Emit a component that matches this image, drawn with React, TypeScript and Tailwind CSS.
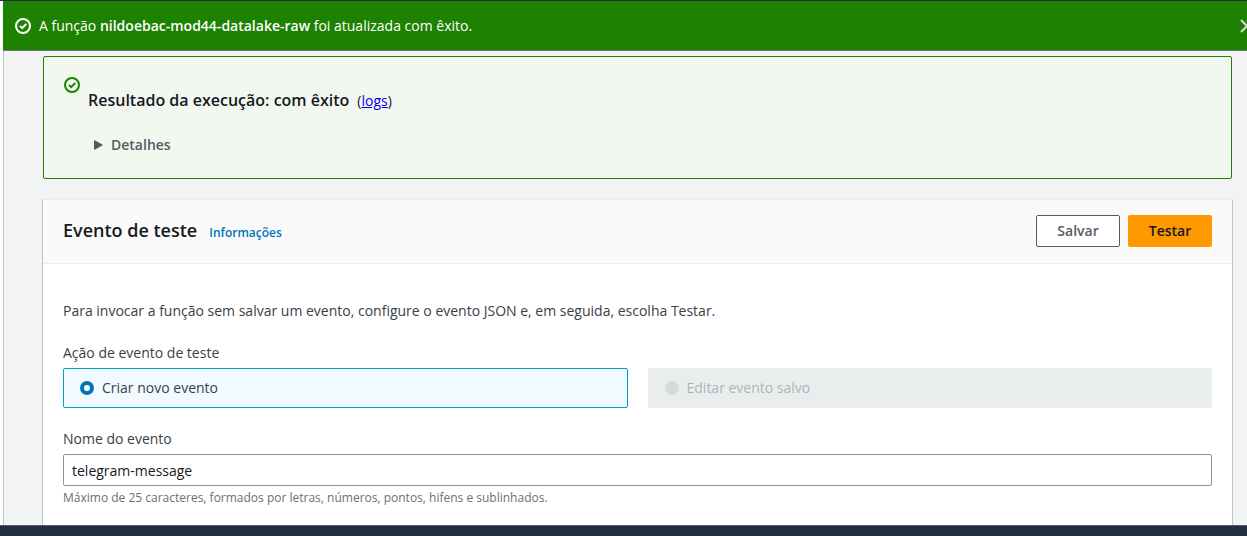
import { useState } from "react";

function SuccessIcon() {
  return (
    <svg viewBox="0 0 16 16" className="size-4 shrink-0" fill="none" stroke="currentColor" strokeWidth="2" aria-hidden="true">
      <circle cx="8" cy="8" r="7" />
      <path d="M4.9 7.9l2.3 2.2 4-4.1" />
    </svg>
  );
}

function Banner({ onClose }: { onClose: () => void }) {
  return (
    <div
      role="status"
      className="flex h-[50px] shrink-0 items-center justify-between overflow-hidden border-b border-[#687078] bg-[#1d8102] pl-3 text-white shadow-sm"
    >
      <div className="flex items-center gap-2">
        <SuccessIcon />
        <p>
          A função <strong className="font-semibold">nildoebac-mod44-datalake-raw</strong> foi atualizada com êxito.
        </p>
      </div>
      <button type="button" aria-label="Fechar" onClick={onClose} className="-mr-2 text-[#d5dbdb]">
        <svg viewBox="0 0 16 16" className="size-4" fill="none" stroke="currentColor" strokeWidth="2" aria-hidden="true">
          <path d="M2 2l12 12M14 2L2 14" />
        </svg>
      </button>
    </div>
  );
}

function ResultPanel() {
  return (
    <section className="mx-px flex gap-2 rounded-xs border border-[#1d8102] bg-[#f2f8f0] px-5 pt-5 pb-[22px]">
      <span className="text-[#1d8102]">
        <SuccessIcon />
      </span>
      <div className="pt-[11px]">
        <h2 className="flex items-baseline gap-2 text-base leading-6 font-semibold">
          Resultado da execução: com êxito
          <span className="text-sm font-normal text-[#16191f]">
            (<a href="#logs" className="text-[#0000ee] underline">logs</a>)
          </span>
        </h2>
        <details className="pt-[22px] text-[#545b64]">
          <summary className="flex cursor-pointer list-none items-center gap-2 pl-1.5 leading-[22px] font-semibold">
            <svg viewBox="0 0 9 10" className="h-2.5 w-[9px]" fill="currentColor" aria-hidden="true">
              <path d="M0 0.6Q0 0 0.7 0.2L8.3 4.5Q9 5 8.3 5.5L0.7 9.8Q0 10 0 9.4Z" />
            </svg>
            Detalhes
          </summary>
        </details>
      </div>
    </section>
  );
}

function TestEvent() {
  const [name, setName] = useState("telegram-message");
  return (
    <section className="mt-5 flex-1 border-x border-t border-x-[#bfc6c6] border-t-[#eaeded] bg-white">
      <header className="flex items-center justify-between border-b border-[#eaeded] bg-[#fafafa] px-5 pt-[15px] pb-4">
        <div className="flex items-baseline gap-3 pb-0.5">
          <h2 className="text-lg leading-6 font-semibold">Evento de teste</h2>
          <a href="#info" className="text-xs font-semibold text-[#0073bb]">Informações</a>
        </div>
        <div className="flex gap-2 font-semibold">
          <button type="button" className="h-8 w-[84px] rounded-xs border border-[#545b64] bg-white text-[#545b64]">
            Salvar
          </button>
          <button type="button" className="h-8 w-[84px] rounded-xs bg-[#ff9900] text-[#16191f]">
            Testar
          </button>
        </div>
      </header>
      <form className="px-5 pt-9 leading-[22px] text-[#3b4047]" onSubmit={(e) => e.preventDefault()}>
        <p>Para invocar a função sem salvar um evento, configure o evento JSON e, em seguida, escolha Testar.</p>
        <fieldset className="mt-5">
          <legend>Ação de evento de teste</legend>
          <div className="grid grid-cols-2 gap-5 pt-1">
            <label className="flex h-10 items-center gap-2 rounded-xs border border-[#00a1c9] bg-[#f1faff] px-4">
              <input
                type="radio"
                name="action"
                defaultChecked
                className="size-3.5 appearance-none rounded-full border border-[#aab7b8] bg-white checked:border-4 checked:border-[#0073bb]"
              />
              Criar novo evento
            </label>
            <label className="flex h-10 items-center gap-2 rounded-xs border border-[#eaeded] bg-[#eaeded] px-4 text-[#aab7b8]">
              <input type="radio" name="action" disabled className="size-3.5 appearance-none rounded-full bg-[#d5dbdb]" />
              Editar evento salvo
            </label>
          </div>
        </fieldset>
        <label htmlFor="event-name" className="mt-5 block">Nome do evento</label>
        <input
          id="event-name"
          type="text"
          aria-describedby="event-name-hint"
          value={name}
          onChange={(e) => setName(e.target.value)}
          className="mt-1 block h-8 w-full rounded-xs border border-[#879596] bg-white px-2 text-[#16191f]"
        />
        <p id="event-name-hint" className="mt-1 text-xs leading-4 text-[#687078]">
          Máximo de 25 caracteres, formados por letras, números, pontos, hifens e sublinhados.
        </p>
      </form>
    </section>
  );
}

export default function App() {
  const [open, setOpen] = useState(true);
  return (
    <div className="flex min-h-screen flex-col border-t border-[#232f3e] bg-white font-['Open_Sans','Noto_Sans',sans-serif] text-sm text-[#16191f]">
      <div className="ml-[3px] flex flex-1 flex-col">
        {open && <Banner onClose={() => setOpen(false)} />}
        <main className="flex flex-1 flex-col border-l border-[#bfc6c6] bg-[#f2f3f3] pt-[5px] pr-3.5 pl-[38px]">
          <ResultPanel />
          <TestEvent />
        </main>
      </div>
      <footer className="h-[11px] border-t border-[#545b64] bg-[#232f3e]" />
    </div>
  );
}
